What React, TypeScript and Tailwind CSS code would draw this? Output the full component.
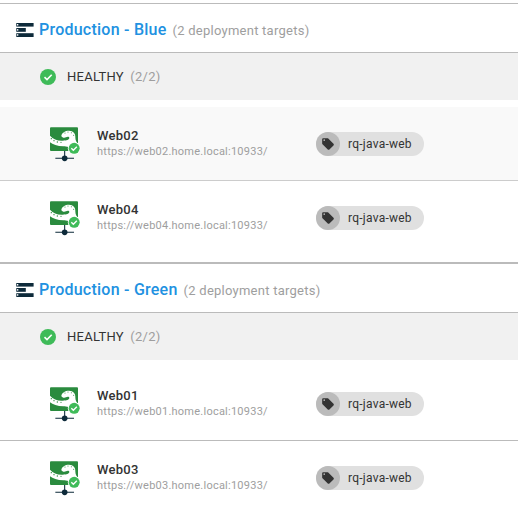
import React from "react";

function EnvironmentIcon() {
  return (
    <svg className="mt-[3px] h-[14px] w-[18px] shrink-0" viewBox="0 0 18 14">
      <g fill="#0d2a3a">
        <rect x="0.3" y="0" width="17.3" height="3.6" />
        <rect x="0.3" y="5" width="9.5" height="3.8" />
        <rect x="0.3" y="10.200" width="17.3" height="3.800" />
      </g>
      <g fill="#fff">
        <rect x="1" y="1" width="1.3" height="1.5" />
        <rect x="1" y="6.1" width="1.3" height="1.5" />
        <rect x="1" y="11.2" width="1.3" height="1.5" />
      </g>
    </svg>
  );
}

function CheckIcon() {
  return (
    <svg className="size-4 shrink-0" viewBox="0 0 16 16">
      <circle cx="8" cy="8" r="8" fill="#3fbb59" />
      <path d="M4.500 8.200 7 10.600 11.700 5.800" fill="none" stroke="#fff" strokeWidth="1.6" />
    </svg>
  );
}

function TentacleIcon() {
  return (
    <svg className="h-[35px] w-[31px] shrink-0" viewBox="0 0 93 105">
      <rect x="0" y="1" width="84" height="71" rx="3" fill="#2a8b3e" />
      <path
        d="M0 26C10 37 23 42 38 41C50 41 58 38 58 33C58 29 53 28 48 31C43 34 36 32 34 27C35 17 46 11 57 11C70 11 77 20 76 31C76 39 79 46 84 50V60H56C50 60 45 58 40 58C22 58 8 53 0 46Z"
        fill="#fff"
      />
      <g fill="#2a8b3e">
        <circle cx="4" cy="35" r="2" />
        <circle cx="12" cy="41" r="2" />
        <circle cx="22" cy="45" r="2" />
        <circle cx="33" cy="46" r="1.8" />
        <circle cx="45" cy="18" r="1.6" />
        <circle cx="54" cy="15" r="1.6" />
        <circle cx="64" cy="17" r="1.6" />
        <circle cx="71" cy="25" r="1.6" />
      </g>
      <path d="M44 72V94M16 94H72" stroke="#0d2a3a" strokeWidth="3.2" />
      <circle cx="44" cy="94" r="8.5" fill="#0d2a3a" />
      <circle cx="72.5" cy="64" r="19" fill="#fff" />
      <circle cx="72.5" cy="64" r="16.5" fill="#3fbb59" />
      <path d="M64 64 70 70 80.500 59" fill="none" stroke="#fff" strokeWidth="4" />
    </svg>
  );
}

function RoleTag({ label }: { label: string }) {
  return (
    <span className="flex h-6 w-[108px] items-center rounded-full bg-[#e0e0e0]">
      <span className="flex size-6 shrink-0 items-center justify-center rounded-full bg-[#bbb]">
        <svg className="size-[14px]" viewBox="0 0 24 24" fill="#333">
          <path d="M21.410 11.580l-9-9C12.050 2.220 11.550 2 11 2H4c-1.100 0-2 .9-2 2v7c0 .55.220 1.050.59 1.420l9 9c.36.36.860.58 1.410.58s1.050-.220 1.410-.59l7-7c.37-.36.59-.860.59-1.410s-.230-1.060-.59-1.420zM5.500 7C4.670 7 4 6.330 4 5.500S4.670 4 5.500 4 7 4.670 7 5.500 6.330 7 5.500 7z" />
        </svg>
      </span>
      <span className="ml-2 text-[12px] leading-6 tracking-[0.25px] text-[#333]">{label}</span>
    </span>
  );
}

function Target({ name, className }: { name: string; className: string }) {
  return (
    <div className={`flex h-[74px] items-start ${className}`}>
      <div className="ml-[50px] mt-5">
        <TentacleIcon />
      </div>
      <div className="ml-4 mt-[21px] w-[219px]">
        <div className="text-[13px] leading-4 font-medium tracking-[0.25px] text-[#333]">{name}</div>
        <div className="text-[11px] leading-4 tracking-[0.24px] text-[#9e9e9e]">
          https://{name.toLowerCase()}.home.local:10933/
        </div>
      </div>
      <div className="mt-[25px]">
        <RoleTag label="rq-java-web" />
      </div>
    </div>
  );
}

function Environment({ name, targets, highlight }: { name: string; targets: string[]; highlight?: boolean }) {
  return (
    <section className="h-[260px] border-t border-[#bbb]">
      <div className="flex h-[49px] items-center border-b border-[#bbb] pl-4">
        <EnvironmentIcon />
        <h2 className="ml-[5px] w-max pt-1 text-[16px] leading-5 font-medium tracking-[0.24px] text-[#2191e1]">{name}</h2>
        <span className="ml-[6px] pt-[5px] text-[13px] leading-5 tracking-[0.25px] text-[#9e9e9e]">(2 deployment targets)</span>
      </div>
      <div className="flex h-[47px] items-center bg-[#f1f1f1] pl-10">
        <CheckIcon />
        <span className="ml-[11px] text-[13px] tracking-[0.25px] text-[#333]">HEALTHY</span>
        <span className="ml-[6.500px] text-[13px] tracking-[0.25px] text-[#9e9e9e]">(2/2)</span>
      </div>
      <div className="pt-[7px]">
        <Target name={targets[0]} className={highlight ? "border-b border-[#ccc] bg-[#f9f9f9]" : "border-b border-[#bbb]"} />
        <Target name={targets[1]} className="" />
      </div>
    </section>
  );
}

export default function App() {
  return (
    <main className="h-[517px] overflow-hidden bg-white pt-[3px] font-[Roboto,sans-serif]">
      <div className="h-[260px] border-b border-[#bbb]">
        <Environment name="Production - Blue" targets={["Web02", "Web04"]} highlight />
      </div>
      <Environment name="Production - Green" targets={["Web01", "Web03"]} />
    </main>
  );
}
